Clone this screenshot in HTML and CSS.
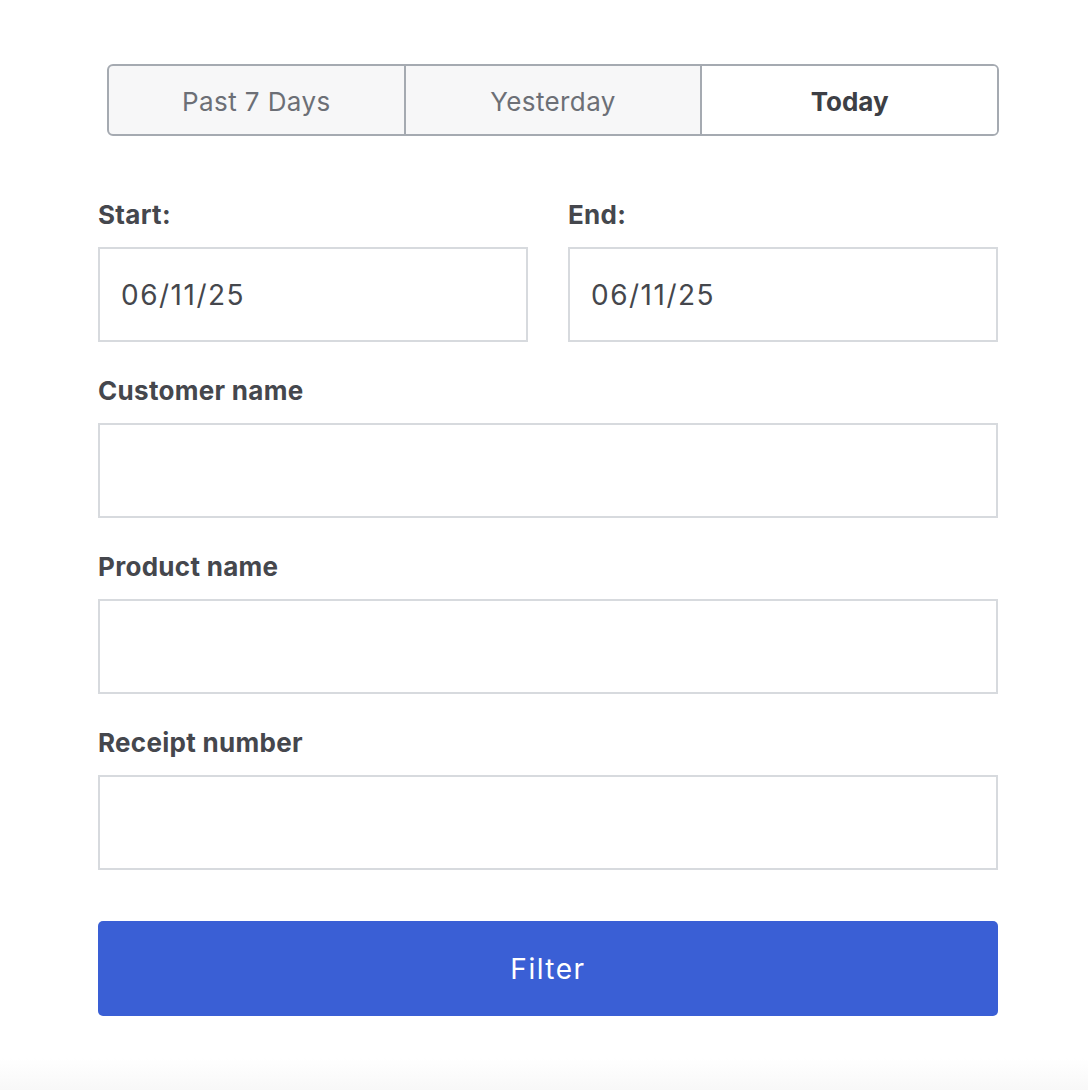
FILE: index.html
```html
<!DOCTYPE html>
<html lang="en">
<head>
<meta charset="utf-8">
<title>Filter</title>
<link rel="stylesheet" href="styles.css">
</head>
<body>
<main class="panel">
  <div class="segmented">
    <button class="seg">Past 7 Days</button>
    <button class="seg">Yesterday</button>
    <button class="seg seg-active">Today</button>
  </div>
  <form class="form">
    <div class="row">
      <div class="field">
        <label class="label">Start:</label>
        <input class="input" type="text" value="06/11/25">
      </div>
      <div class="field">
        <label class="label">End:</label>
        <input class="input" type="text" value="06/11/25">
      </div>
    </div>
    <div class="field">
      <label class="label">Customer name</label>
      <input class="input" type="text">
    </div>
    <div class="field">
      <label class="label">Product name</label>
      <input class="input" type="text">
    </div>
    <div class="field">
      <label class="label">Receipt number</label>
      <input class="input" type="text">
    </div>
    <button class="submit" type="button">Filter</button>
  </form>
</main>
</body>
</html>
```

FILE: styles.css
```css
* { box-sizing: border-box; }
html, body {
  margin: 0;
  background: #ffffff;
}
body {
  min-height: 1090px;
  font-family: "Inter", "Liberation Sans", sans-serif;
  color: #45474d;
  background: linear-gradient(to bottom, #ffffff 0, #ffffff 1058px, #f8f8f8 1090px);
}
.panel {
  width: 900px;
  margin-left: 98px;
  padding-top: 64px;
}
.segmented {
  display: flex;
  margin: 0 -1px 0 9px;
  height: 72px;
  border: 2px solid #a5aab1;
  border-radius: 6px;
  overflow: hidden;
  background: #f7f7f8;
}
.seg {
  flex: 1;
  border: none;
  background: transparent;
  font-family: inherit;
  font-size: 26px;
  letter-spacing: 0.4px;
  color: #6c6f76;
  padding: 2px 0 0;
  cursor: pointer;
}
.seg + .seg {
  border-left: 2px solid #a5aab1;
}
.seg-active {
  background: #ffffff;
  color: #3d3f45;
  font-weight: 700;
  letter-spacing: 0;
}
.form {
  margin-top: 63px;
  display: flex;
  flex-direction: column;
  gap: 33px;
}
.row {
  display: flex;
  gap: 40px;
}
.row .field {
  flex: 1 1 0;
  min-width: 0;
}
.field {
  display: flex;
  flex-direction: column;
  gap: 16px;
}
.label {
  font-size: 26px;
  line-height: 32px;
  font-weight: 700;
  letter-spacing: 0.3px;
  color: #45474d;
}
.input {
  width: 100%;
  min-width: 0;
  height: 95px;
  border: 2px solid #d7dade;
  border-radius: 0;
  padding: 0 21px;
  font-family: inherit;
  font-size: 28px;
  letter-spacing: 1.5px;
  color: #45474d;
  background: #fff;
  outline: none;
}
.submit {
  margin-top: 18px;
  height: 95px;
  border: none;
  border-radius: 5px;
  background: #3a5fd5;
  color: #ffffff;
  font-family: inherit;
  font-size: 28px;
  letter-spacing: 1.5px;
  cursor: pointer;
}
```
